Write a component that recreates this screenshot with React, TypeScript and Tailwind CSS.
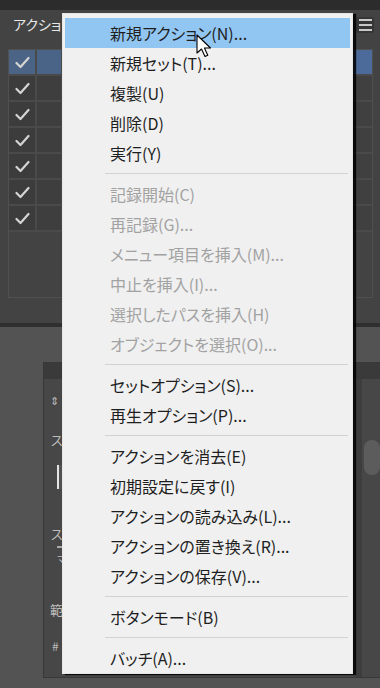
import React from "react";

type Item = { label: string; disabled?: boolean; active?: boolean } | "sep";

const items: Item[] = [
  { label: "新規アクション(N)...", active: true },
  { label: "新規セット(T)..." },
  { label: "複製(U)" },
  { label: "削除(D)" },
  { label: "実行(Y)" },
  "sep",
  { label: "記録開始(C)", disabled: true },
  { label: "再記録(G)...", disabled: true },
  { label: "メニュー項目を挿入(M)...", disabled: true },
  { label: "中止を挿入(I)...", disabled: true },
  { label: "選択したパスを挿入(H)", disabled: true },
  { label: "オブジェクトを選択(O)...", disabled: true },
  "sep",
  { label: "セットオプション(S)..." },
  { label: "再生オプション(P)..." },
  "sep",
  { label: "アクションを消去(E)" },
  { label: "初期設定に戻す(I)" },
  { label: "アクションの読み込み(L)..." },
  { label: "アクションの置き換え(R)..." },
  { label: "アクションの保存(V)..." },
  "sep",
  { label: "ボタンモード(B)" },
  "sep",
  { label: "バッチ(A)..." },
];

function Check() {
  return (
    <svg width="15" height="13" viewBox="0 0 15 13">
      <path d="M1.5 7 L5.5 11 L13.5 2" fill="none" stroke="#d4d4d4" strokeWidth="2.2" strokeLinecap="round" strokeLinejoin="round" />
    </svg>
  );
}

function Row({ active }: { active?: boolean }) {
  return (
    <div className="h-[26px] flex border-b-2 border-[#4a4a4a]">
      <div className={`w-[28px] flex items-center justify-center border-r-2 border-[#4a4a4a] ${active ? "bg-[#4b6384]" : "bg-[#3c3c3c]"}`}>
        <Check />
      </div>
      <div className={`w-[26px] border-r-2 border-[#4a4a4a] ${active ? "bg-[#4a6488]" : "bg-[#3e3e3e]"}`} />
      <div className={`flex-1 ${active ? "bg-[#4d6b9a]" : "bg-[#404040]"}`} />
    </div>
  );
}

export default function App() {
  return (
    <div className="relative w-[380px] h-[688px] overflow-hidden bg-[#535353] font-['Noto_Sans_CJK_JP','Noto_Sans',sans-serif] [font-feature-settings:'palt']">
      <div className="h-[10px] bg-[#2c2c2c]" />
      <div className="h-[313px] bg-[#434343] flex flex-col">
        <div className="h-[39px] flex items-start justify-between pl-[13px] pr-[6px] pt-[5px]">
          <span className="text-[14px] leading-[18px] text-[#e8e8e8]">アクション</span>
          <div className="mt-[2px] w-[18px] h-[16px] rounded-[2px] bg-[#363636] flex flex-col items-center justify-center gap-[3px]">
            <div className="w-[13px] h-[2px] bg-[#c8c8c8]" />
            <div className="w-[13px] h-[2px] bg-[#c8c8c8]" />
            <div className="w-[13px] h-[2px] bg-[#c8c8c8]" />
          </div>
        </div>
        <div className="ml-[8px] mr-[7px] h-[249px] border border-[#505050] flex flex-col">
          <Row active />
          <Row />
          <Row />
          <Row />
          <Row />
          <Row />
          <Row />
        </div>
        <div className="flex-1" />
      </div>
      <div className="h-[4px] bg-[#2f2f2f]" />
      <div className="h-[35px]" />
      <div className="ml-[43px] w-[345px] h-[316px] bg-[#474747] border border-[#383838] flex flex-col">
        <div className="h-[16px] bg-[#3a3a3a]" />
        <div className="flex-1 flex">
          <div className="flex-1 flex flex-col text-[#bdbdbd]">
            <div className="mt-[14px] h-[14px] ml-[6px] text-[11px] leading-[14px]">⇕</div>
            <div className="mt-[25px] h-[16px] ml-[7px] text-[13px] leading-[16px]">スタイル</div>
            <div className="mt-[17px] ml-[13px] h-[24px] w-[200px] border-l-2 border-[#e4e4e4] bg-[#515151]" />
            <div className="mt-[37px] h-[16px] ml-[7px] text-[13px] leading-[16px]">スタイル</div>
            <div className="mt-[4px] ml-[13px] h-[2px] w-[8px] bg-[#aaaaaa]" />
            <div className="mt-[4px] h-[14px] ml-[13px] text-[11px] leading-[14px]">マ</div>
            <div className="mt-[36px] h-[16px] ml-[6px] text-[13px] leading-[16px]">範囲</div>
            <div className="mt-[20px] h-[16px] ml-[8px] text-[12px] leading-[16px]">#</div>
          </div>
          <div className="w-[6px] bg-[#3d3d3d]" />
          <div className="w-[25px] flex flex-col items-start pl-[2px]">
            <div className="mt-[61px] w-[16px] h-[35px] rounded-full bg-[#5c5c5c]" />
          </div>
        </div>
      </div>

      {/* context menu */}
      <div className="absolute left-[62px] top-[13px] w-[291px] h-[661px] bg-[#f0f0f0] border border-[#e6e6e6] shadow-[3px_1px_1px_rgba(0,0,0,0.85)] pt-[4px] flex flex-col">
        {items.map((it, i) =>
          it === "sep" ? (
            <div key={i} className="h-[11px] flex items-center ml-[42px] mr-[4px]">
              <div className="h-px w-full bg-[#d2d2d2]" />
            </div>
          ) : (
            <div
              key={i}
              className={`h-[30px] mx-[2px] flex items-center pl-[45px] text-[16px] leading-none whitespace-nowrap ${
                it.active ? "bg-[#92c6f2]" : ""
              } ${it.disabled ? "text-[#a2a2a2]" : "text-[#1e1e1e]"}`}
            >
              {it.label}
            </div>
          )
        )}
      </div>

      {/* mouse cursor */}
      <svg className="absolute left-[196px] top-[34px]" width="17" height="25" viewBox="0 0 17 25">
        <path d="M1 1 L1 19 L5.5 15 L9 22.5 L11.8 21.3 L8.4 14 L14.5 14 Z" fill="#ffffff" stroke="#000000" strokeWidth="1.1" strokeLinejoin="round" />
      </svg>
    </div>
  );
}
